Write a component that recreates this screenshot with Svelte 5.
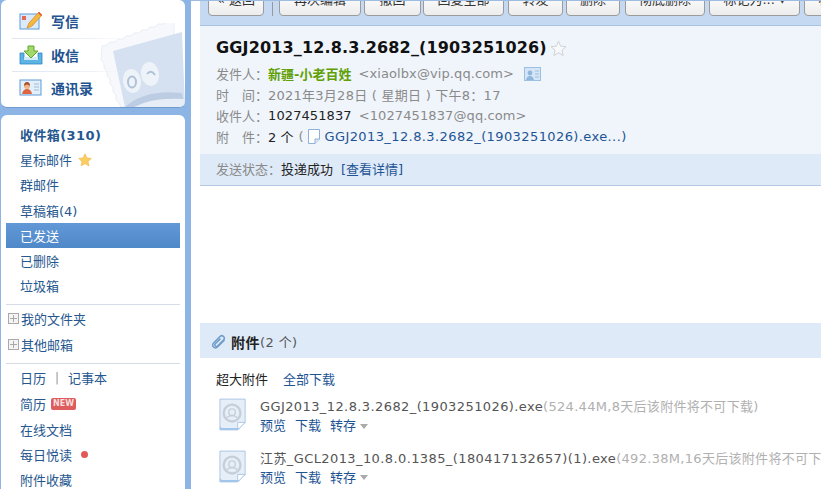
<script>
	const folders = [
		{ name: '星标邮件', star: true },
		{ name: '群邮件' },
		{ name: '草稿箱(4)' },
		{ name: '已发送', active: true },
		{ name: '已删除' },
		{ name: '垃圾箱' }
	];
	const buttons = [
		{ label: '再次编辑', w: 82 },
		{ label: '撤回', w: 57, gap: 3 },
		{ label: '回复全部', w: 81, gap: 2 },
		{ label: '转发', w: 55, gap: 4 },
		{ label: '删除', w: 54, gap: 3 },
		{ label: '彻底删除', w: 80, gap: 5 },
		{ label: '标记为... ▾', w: 91, gap: 4 },
		{ label: '移动到... ▾', w: 91, gap: 4 }
	];
	const files = [
		{ name: 'GGJ2013_12.8.3.2682_(1903251026).exe', info: '(524.44M,8天后该附件将不可下载)' },
		{ name: '江苏_GCL2013_10.8.0.1385_(180417132657)(1).exe', info: '(492.38M,16天后该附件将不可下载)' }
	];
</script>

<div class="page">
	<aside class="side">
		<div class="panel nav">
			<svg class="stamp" width="85" height="84" viewBox="0 0 85 84">
				<path d="M2 23 l5 -1 l3 -3 l5 0 l3 -3 l5 0 l3 -3 l5 0 l3 -3 l5 0 l3 -3 l5 0 l3 -3 l5 0 l3 -3 l5 0 l3 -2 l8 -1 V84 H21 l-2 -4 l-3 -3 l0 -5 l-3 -3 l0 -5 l-3 -3 l0 -5 l-3 -3 l0 -5 l-3 -3 l0 -5 l-3 -3 Z" fill="#f6f8fc" stroke="#e8edf5" />
				<path d="M13 28 L82 9 L85 84 H25 Z" fill="#d5e1f0" />
				<ellipse cx="32" cy="58" rx="9" ry="12" fill="#eef3f9" transform="rotate(-10 32 58)" />
				<ellipse cx="50" cy="51" rx="9" ry="12" fill="#eef3f9" transform="rotate(-10 50 51)" />
				<ellipse cx="32" cy="59" rx="4" ry="5.500" fill="none" stroke="#afc2da" stroke-width="2" />
				<path d="M47 51 Q51 46 55 52" fill="none" stroke="#afc2da" stroke-width="2" />
				<path d="M25 84 Q45 66 82 70 L85 84 Z" fill="#bccde3" />
				<path d="M34 84 Q52 74 84 76 V84 Z" fill="#e6edf6" />
			</svg>
			<a class="nav-row">
				<svg width="24" height="20" viewBox="0 0 24 20">
					<rect x="1" y="3" width="19" height="15" fill="#dbeafa" stroke="#5c9bd6" />
					<rect x="3" y="5" width="4" height="4" fill="#e2685a" />
					<path d="M8 17 L10 12 L20 1 L23 4 L13 15 Z" fill="#f5b942" stroke="#d98a1f" stroke-width=".8" />
					<path d="M19 2 L20 1 L23 4 L22 5 Z" fill="#e2583e" />
				</svg>
				<span>写信</span>
			</a>
			<div class="nav-line"></div>
			<a class="nav-row">
				<svg width="24" height="20" viewBox="0 0 24 20">
					<path d="M1 8 H5 V14 H19 V8 H23 V19 H1 Z" fill="#5cb4e4" stroke="#2f86c4" stroke-width=".8" />
					<rect x="5" y="12" width="14" height="3" fill="#cfeafa" />
					<path d="M9 1 H15 V6 H19 L12 13 L5 6 H9 Z" fill="#a5d86c" stroke="#5fa82e" />
				</svg>
				<span>收信</span>
			</a>
			<div class="nav-line"></div>
			<a class="nav-row">
				<svg width="24" height="18" viewBox="0 0 24 18">
					<rect x="1" y="1" width="21" height="15" fill="#e3effa" stroke="#5c9bd6" />
					<circle cx="8" cy="7" r="3" fill="#f0b489" />
					<path d="M5 7 Q5 3 8 3 Q11 3 11 7 Q8 4 5 7 Z" fill="#a9502a" />
					<path d="M3 15 Q4 10 8 10 Q12 10 13 15 Z" fill="#e0663f" />
					<path d="M15 5 H20 M15 8 H20 M15 11 H20" stroke="#9dbcdc" />
				</svg>
				<span>通讯录</span>
			</a>
		</div>

		<div class="panel tree">
			<a class="row inbox">收件箱(310)</a>
			{#each folders as f}
				<a class="row" class:active={f.active}>
					{f.name}
					{#if f.star}
						<svg class="star" width="14" height="14" viewBox="0 0 14 14">
							<path d="M7 .8 L8.9 4.9 L13.3 5.4 L10 8.4 L10.9 12.9 L7 10.6 L3.1 12.9 L4 8.4 L.7 5.4 L5.1 4.9 Z" fill="#fbcf5f" stroke="#f0b040" stroke-width=".6" />
						</svg>
					{/if}
				</a>
			{/each}
			<div class="line first"></div>
			<a class="row plus"><i class="box"></i>我的文件夹</a>
			<a class="row plus"><i class="box"></i>其他邮箱</a>
			<div class="line second"></div>
			<a class="row tools"><span>日历</span><b>|</b><span>记事本</span></a>
			<a class="row">简历<em>NEW</em></a>
			<a class="row">在线文档</a>
			<a class="row">每日悦读<i class="dot"></i></a>
			<a class="row">附件收藏</a>
		</div>
	</aside>

	<main class="main">
		<div class="toolbar">
			<button style="width:56px">« 返回</button>
			<span class="sep"></span>
			{#each buttons as b}
				<button style="width:{b.w}px;margin-left:{b.gap || 0}px">{b.label}</button>
			{/each}
		</div>

		<section class="head">
			<h1>GGJ2013_12.8.3.2682_(1903251026)<svg class="hollow" width="17" height="17" viewBox="0 0 17 17"><path d="M8.5 1.2 L10.6 6.2 L16 6.7 L11.9 10.2 L13.2 15.6 L8.5 12.7 L3.8 15.6 L5.1 10.2 L1 6.7 L6.4 6.2 Z" fill="#f8f9fb" stroke="#cfd3d8" /></svg></h1>
			<p><label>发件人：</label><strong>新疆-小老百姓</strong><span class="addr">&lt;xiaolbx@vip.qq.com&gt;</span>
				<svg class="card" width="17" height="14" viewBox="0 0 17 14"><rect x=".5" y=".5" width="16" height="13" fill="#d5e5f5" stroke="#9cc0e2" /><circle cx="6" cy="6" r="2.4" fill="#8fb6dc" /><path d="M2 13 Q3 9 6 9 Q9 9 10 13 Z" fill="#8fb6dc" /><path d="M11 4 H15 M11 7 H15 M11 10 H15" stroke="#9cc0e2" /></svg>
			</p>
			<p><label>时　间：</label><span class="date">2021年3月28日 ( 星期日 ) 下午8：17</span></p>
			<p><label>收件人：</label><span class="black num">1027451837</span><span class="addr">&lt;1027451837@qq.com&gt;</span></p>
			<p><label>附　件：</label><span class="black">2 个</span><span class="paren"> (</span><svg class="doc" width="14" height="17" viewBox="0 0 14 17"><path d="M1.5 1.5 H12.5 V11 L8 15.5 H1.5 Z" fill="#fff" stroke="#8fb1d8" /><path d="M12.5 11 H8 V15.5" fill="#dbe7f5" stroke="#8fb1d8" /></svg><a class="link wide">GGJ2013_12.8.3.2682_(1903251026).exe...)</a></p>
		</section>

		<div class="status"><label>发送状态：</label><span class="black">投递成功</span><a class="link more">[查看详情]</a></div>

		<div class="body"></div>

		<section class="attach">
			<div class="attach-title">
				<svg width="16" height="16" viewBox="0 0 16 16"><path d="M13.5 6 L7 12.5 Q4.5 15 2.5 13 Q.5 11 3 8.5 L9 2.5 Q10.800 .8 12.500 2.500 Q14.200 4.200 12.500 6 L6.500 12 Q5.300 13 4.300 12 Q3.300 11 4.300 9.800 L9.500 4.600" fill="none" stroke="#6f9cc9" stroke-width="1.500" /></svg>
				<b>附件</b><span>(2 个)</span>
			</div>
			<div class="attach-sub"><b>超大附件</b><a class="link">全部下载</a></div>
			{#each files as file}
				<div class="file">
					<svg class="file-icon" width="28" height="33" viewBox="0 0 30 35">
						<path d="M1 1 H28 V26 L20 34 H1 Z" fill="#e6eef8" stroke="#a9c5e6" />
						<path d="M28 26 H20 V34 Z" fill="#fff" stroke="#a9c5e6" />
						<path d="M1 30 V34 H20 L22 32 H3 Z" fill="#a3c5ea" />
						<circle cx="14" cy="16" r="9" fill="none" stroke="#c6cfd9" stroke-width="2.500" />
						<circle cx="14" cy="15" r="3.500" fill="none" stroke="#c6cfd9" stroke-width="1.500" />
						<path d="M8 21 Q14 16 20 21" fill="none" stroke="#c6cfd9" stroke-width="1.500" />
					</svg>
					<div class="file-text">
						<div class="file-name">{file.name}<span>{file.info}</span></div>
						<div class="file-links"><a class="link">预览</a><a class="link">下载</a><a class="link">转存</a><i class="caret"></i></div>
					</div>
				</div>
			{/each}
		</section>
	</main>
</div>

<style>
	:global(body) {
		margin: 0;
		background: #8cb5e6;
	}

	.page {
		display: flex;
		width: 821px;
		height: 489px;
		overflow: hidden;
		font-family: "DejaVu Sans", Verdana, "Noto Sans CJK SC", sans-serif;
		font-size: 13px;
		color: #1e5494;
	}

	.side {
		width: 191px;
		flex: none;
		padding: 0 6px 0 1px;
		box-sizing: border-box;
	}

	.panel {
		background: #fff;
		border-radius: 6px;
		position: relative;
		overflow: hidden;
	}

	.nav {
		height: 108px;
		padding: 5px 0 0 18px;
		box-sizing: border-box;
		border-bottom: 1px solid #6f9bd2;
	}

	.stamp {
		position: absolute;
		right: 0;
		bottom: 0;
	}

	.nav-row {
		position: relative;
		display: flex;
		align-items: center;
		height: 32.5px;
		font-size: 14px;
		font-weight: bold;
		font-family: "Noto Sans CJK SC", sans-serif;
		color: #22528f;
	}

	.nav-row svg {
		width: 24px;
		margin-right: 8px;
	}

	.nav-line {
		position: relative;
		width: 115px;
		height: 1px;
		margin: 0 0 0 -7px;
		background: linear-gradient(90deg, #dfe6f2, #eef2f8 70%, transparent);
	}

	.tree {
		margin-top: 7px;
		padding-top: 7px;
		height: 400px;
	}

	.row {
		display: flex;
		align-items: center;
		height: 25.2px;
		margin: 0 5px;
		padding-left: 14px;
		white-space: nowrap;
		color: #26578f;
		font-family: "DejaVu Sans", "Noto Sans CJK SC", sans-serif;
		font-size: 13px;
	}

	.inbox {
		font-weight: bold;
		letter-spacing: 0.4px;
	}

	.active {
		background: linear-gradient(#6298d6, #4f88c8);
		color: #fff;
	}

	.star {
		margin-left: 6px;
	}

	.line {
		height: 1px;
		margin: 6px 5px 1px;
		background: #d5dce8;
	}

	.line.second {
		margin: 6px 5px 1px;
	}

	.plus {
		padding-left: 2px;
	}

	.box {
		position: relative;
		width: 9px;
		height: 9px;
		margin-right: 2px;
		border: 1px solid #a9a9a9;
		background: linear-gradient(#a9a9a9, #a9a9a9) center / 7px 1px no-repeat, linear-gradient(#a9a9a9, #a9a9a9) center / 1px 7px no-repeat, #f4f4f4;
	}

	.tools {
		height: 26.6px;
	}

	.tools b {
		font-weight: normal;
		color: #999;
		margin: 0 9px;
		font-size: 12px;
	}

	.row em {
		font-style: normal;
		font-weight: bold;
		font-size: 8px;
		background: #dd5c5c;
		color: #f7dede;
		border-radius: 2px;
		padding: 1px 2px;
		line-height: 10px;
		margin-left: 5px;
	}

	.dot {
		width: 7px;
		height: 7px;
		border-radius: 50%;
		background: #e05a5a;
		margin-left: 9px;
	}

	.main {
		flex: 1;
		min-width: 0;
		background: #fff;
		padding-left: 9px;
		border-top: 1px solid #9dbce2;
		overflow: hidden;
	}

	.toolbar {
		display: flex;
		align-items: flex-end;
		height: 25px;
		padding: 0 0 9px 8px;
		box-sizing: border-box;
		background: #c5daf2;
		border-bottom: 1px solid #a8c3e2;
		white-space: nowrap;
	}

	button {
		flex: none;
		height: 24px;
		padding: 7px 0 0;
		box-sizing: border-box;
		border: 1px solid #9b9b9b;
		border-radius: 4px;
		background: linear-gradient(#fff, #ececec);
		font: 13px "DejaVu Sans", "Noto Sans CJK SC", sans-serif;
		color: #333;
		line-height: 0;
		display: flex;
		align-items: flex-start;
		justify-content: center;
	}

	.sep {
		flex: none;
		width: 1px;
		height: 14px;
		margin: 0 6px 0 8px;
		background: #999;
	}

	.head {
		height: 128px;
		box-sizing: border-box;
		padding: 11px 0 0 16px;
		background: #f0f5fc;
	}

	h1 {
		display: flex;
		align-items: center;
		margin: 0 0 4px;
		font-size: 16px;
		letter-spacing: 0.15px;
		line-height: 22px;
		color: #111;
		font-weight: bold;
	}

	.hollow {
		margin-left: 3px;
	}

	.head p {
		display: flex;
		align-items: center;
		margin: 0;
		height: 21px;
		white-space: nowrap;
		font-family: "DejaVu Sans", "Noto Sans CJK SC", sans-serif;
		font-size: 13px;
		color: #8a8a8a;
	}

	label {
		color: #8a8a8a;
	}

	strong {
		color: #5fa005;
		font-weight: bold;
	}

	.addr {
		margin-left: 7px;
		letter-spacing: 0.1px;
		color: #8a8a8a;
	}

	.date {
		letter-spacing: 0.25px;
	}

	.num {
		letter-spacing: 0.1px;
	}

	.card {
		margin-left: 10px;
	}

	.black {
		color: #222;
	}

	.paren {
		margin-left: 5px;
	}

	.doc {
		margin: 0 4px 0 3px;
	}

	.link {
		color: #1e5494;
	}

	.wide {
		letter-spacing: 0.4px;
	}

	.status {
		display: flex;
		align-items: center;
		height: 32px;
		padding: 0 0 2px 16px;
		background: #dfeaf8;
		border-bottom: 1px solid #b5c9e3;
		box-sizing: border-box;
		font-family: "DejaVu Sans", "Noto Sans CJK SC", sans-serif;
	}

	.more {
		margin-left: 8px;
	}

	.body {
		height: 137px;
	}

	.attach-title {
		display: flex;
		align-items: center;
		height: 35px;
		padding: 2px 0 0 11px;
		box-sizing: border-box;
		background: #dfeaf8;
		color: #555;
	}

	.attach-title b {
		margin-left: 4px;
		color: #222;
		font-size: 14px;
		letter-spacing: 0.5px;
	}

	.attach-title span {
		letter-spacing: 0.4px;
	}

	.attach-sub {
		display: flex;
		gap: 15px;
		height: 41px;
		padding: 13px 0 0 16px;
		box-sizing: border-box;
		line-height: 18px;
		white-space: nowrap;
	}

	.attach-sub b {
		font-weight: normal;
		color: #222;
	}

	.file {
		display: flex;
		height: 51.5px;
		padding-left: 19px;
		white-space: nowrap;
	}

	.file-icon {
		flex: none;
		margin: -1px 13px 0 0;
	}

	.file-text {
		line-height: 18px;
	}

	.file-name {
		color: #555;
		font-size: 13px;
		margin-top: -1px;
		letter-spacing: 0.4px;
	}

	.file-name span {
		color: #b0b0b0;
		letter-spacing: 0.3px;
	}

	.file-links {
		display: flex;
		align-items: center;
		gap: 9px;
		margin-top: 1px;
	}

	.caret {
		width: 0;
		height: 0;
		margin-left: -5px;
		border: 4px solid transparent;
		border-top: 5px solid #aaa;
		border-bottom: 0;
	}
</style>
